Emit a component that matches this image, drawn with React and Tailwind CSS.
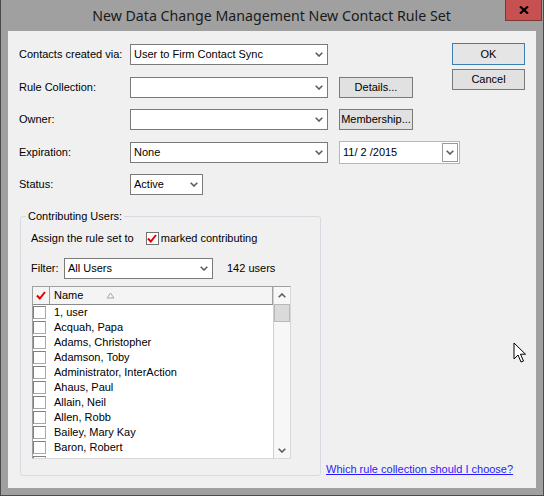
import React from "react";

const users = [
  "1, user",
  "Acquah, Papa",
  "Adams, Christopher",
  "Adamson, Toby",
  "Administrator, InterAction",
  "Ahaus, Paul",
  "Allain, Neil",
  "Allen, Robb",
  "Bailey, Mary Kay",
  "Baron, Robert",
  "Barry, Kevin",
];

function Chevron({ className = "" }) {
  return (
    <svg width="8" height="5" viewBox="0 0 8 5" className={className}>
      <path d="M0.7 0.7 L4 4 L7.3 0.7" fill="none" stroke="#5c5c5c" strokeWidth="1.6" />
    </svg>
  );
}

function RedCheck() {
  return (
    <svg width="10" height="9" viewBox="0 0 10 9">
      <path d="M1 4.5 L3.8 7.5 L9 1" fill="none" stroke="#e00000" strokeWidth="2" />
    </svg>
  );
}

function Combo({ value = "", width }) {
  return (
    <div
      className={`h-[21px] ${width} bg-white border border-[#7a7a7a] flex items-center pl-[3px] pr-[4px]`}
    >
      <span className="flex-1 truncate">{value}</span>
      <Chevron />
    </div>
  );
}

function Button({ children, className = "" }) {
  return (
    <div
      className={`h-[21px] w-[74px] bg-[#e1e1e1] border border-[#7a7a7a] flex items-center justify-center ${className}`}
    >
      {children}
    </div>
  );
}

function FormRow({ label, children, className = "" }) {
  return (
    <div className={`h-[21px] flex items-center ${className}`}>
      <span className="w-[111px]">{label}</span>
      {children}
    </div>
  );
}

export default function App() {
  return (
    <div className="w-[544px] h-[496px] relative bg-[#a0a0a0] border-x border-b border-[#4b4b4b] flex flex-col font-['Liberation_Sans',Arial,sans-serif] text-[11px] leading-[13px] text-black">
      {/* title bar */}
      <div className="h-[31px] flex pr-[1px]">
        <div className="flex-1" />
        <div className="flex items-center font-['Noto_Sans',sans-serif] text-[14.2px] text-[#1a1a1a]">
          New Data Change Management New Contact Rule Set
        </div>
        <div className="flex-1 flex justify-end items-start">
          <div className="w-[37px] h-[21px] bg-[#c75050] border border-t-0 border-[#7d3535] flex items-center justify-center">
            <svg width="10" height="8" viewBox="0 0 10 8">
              <path d="M1 0.5 L9 7.5 M9 0.5 L1 7.5" stroke="#000" strokeWidth="2.2" />
            </svg>
          </div>
        </div>
      </div>

      {/* client area */}
      <div className="mx-[7px] h-[457px] bg-[#f0f0f0] pl-[11px] pt-[12px] flex flex-col">
        <div className="flex">
          <div className="w-[433px] pt-[1px] flex flex-col">
            <FormRow label="Contacts created via:">
              <Combo value="User to Firm Contact Sync" width="w-[198px]" />
            </FormRow>
            <FormRow label="Rule Collection:" className="mt-[12px]">
              <Combo width="w-[198px]" />
              <Button className="ml-[11px]">Details...</Button>
            </FormRow>
            <FormRow label="Owner:" className="mt-[11px]">
              <Combo width="w-[198px]" />
              <Button className="ml-[11px]">Membership...</Button>
            </FormRow>
          </div>
          <div className="w-[73px] flex flex-col">
            <div className="h-[22px] bg-[#e5e5e5] border border-[#3c7fb1] flex items-center justify-center">
              OK
            </div>
            <div className="h-[21px] mt-[4px] bg-[#e1e1e1] border border-[#7a7a7a] flex items-center justify-center">
              Cancel
            </div>
          </div>
        </div>

        <FormRow label="Expiration:" className="mt-[12px]">
          <Combo value="None" width="w-[198px]" />
          <div className="ml-[11px] w-[121px] h-[23px] bg-white border border-[#a3bcd6] flex items-center pl-[3px] pr-[1px]">
            <span className="flex-1">11/ 2 /2015</span>
            <div className="w-[16px] h-[19px] border border-[#9a9a9a] bg-white flex items-center justify-center">
              <Chevron />
            </div>
          </div>
        </FormRow>
        <FormRow label="Status:" className="mt-[11px]">
          <Combo value="Active" width="w-[73px]" />
        </FormRow>

        {/* bottom section */}
        <div className="mt-[15px] flex items-end">
          <fieldset className="ml-[1px] w-[301px] border border-[#d5dbe0] rounded-[3px] px-[5px] pb-[16px]">
            <legend className="px-[2px]">Contributing Users:</legend>
            <div className="pl-[5px] flex flex-col">
              <div className="mt-[8px] h-[15px] flex items-center">
                <span>Assign the rule set to</span>
                <div className="ml-[12px] w-[13px] h-[13px] bg-white border border-[#707070] flex items-center justify-center">
                  <RedCheck />
                </div>
                <span className="ml-[2px]">marked contributing</span>
              </div>

              <div className="mt-[12px] h-[21px] flex items-center">
                <span className="w-[33px]">Filter:</span>
                <Combo value="All Users" width="w-[149px]" />
                <span className="ml-[14px]">142 users</span>
              </div>

              {/* list view */}
              <div className="mt-[7px] ml-[1px] w-[259px] h-[173px] bg-white border border-[#a0a0a0] border-b-[#d8d8d8] border-r-[#d8d8d8] flex overflow-hidden">
                <div className="w-[240px] flex flex-col">
                  <div className="h-[18px] shrink-0 flex bg-[#f4f4f4] border-b border-[#8a8a8a]">
                    <div className="w-[17px] border-r border-[#a0a0a0] flex items-center justify-center">
                      <RedCheck />
                    </div>
                    <div className="flex-1 flex items-center pl-[4px] border-r border-[#a0a0a0]">
                      <span>Name</span>
                      <svg width="9" height="7" viewBox="0 0 9 7" className="ml-[23px]">
                        <path d="M4.5 1 L8 6 L1 6 Z" fill="none" stroke="#a8a8a8" strokeWidth="1" />
                      </svg>
                    </div>
                  </div>
                  <div className="flex flex-col">
                    {users.map((u) => (
                      <div key={u} className="h-[15px] shrink-0 flex items-center">
                        <div className="w-[13px] h-[13px] bg-white border border-[#a8a8a8] border-l-[#7f7f7f] border-t-[#7f7f7f]" />
                        <span className="ml-[8px] whitespace-nowrap">{u}</span>
                      </div>
                    ))}
                  </div>
                </div>
                {/* scrollbar */}
                <div className="w-[17px] bg-[#f7f7f7] border-l border-[#d0d0d0] flex flex-col">
                  <div className="h-[17px] flex items-center justify-center">
                    <Chevron className="rotate-180" />
                  </div>
                  <div className="h-[18px] bg-[#dadada] border border-[#b8b8b8]" />
                  <div className="flex-1" />
                  <div className="h-[16px] flex items-center justify-center">
                    <Chevron />
                  </div>
                </div>
              </div>
            </div>
          </fieldset>
          <a className="ml-[5px] text-[#2a1aff] underline">Which rule collection should I choose?</a>
        </div>
      </div>

      {/* mouse cursor */}
      <svg
        width="14"
        height="22"
        viewBox="0 0 14 22"
        className="absolute left-[512px] top-[342px]"
      >
        <path
          d="M1 1 L1 17 L5 13 L8 20 L10.5 19 L7.5 12.2 L12.5 12.2 Z"
          fill="#fff"
          stroke="#000"
          strokeWidth="1"
        />
      </svg>
    </div>
  );
}
